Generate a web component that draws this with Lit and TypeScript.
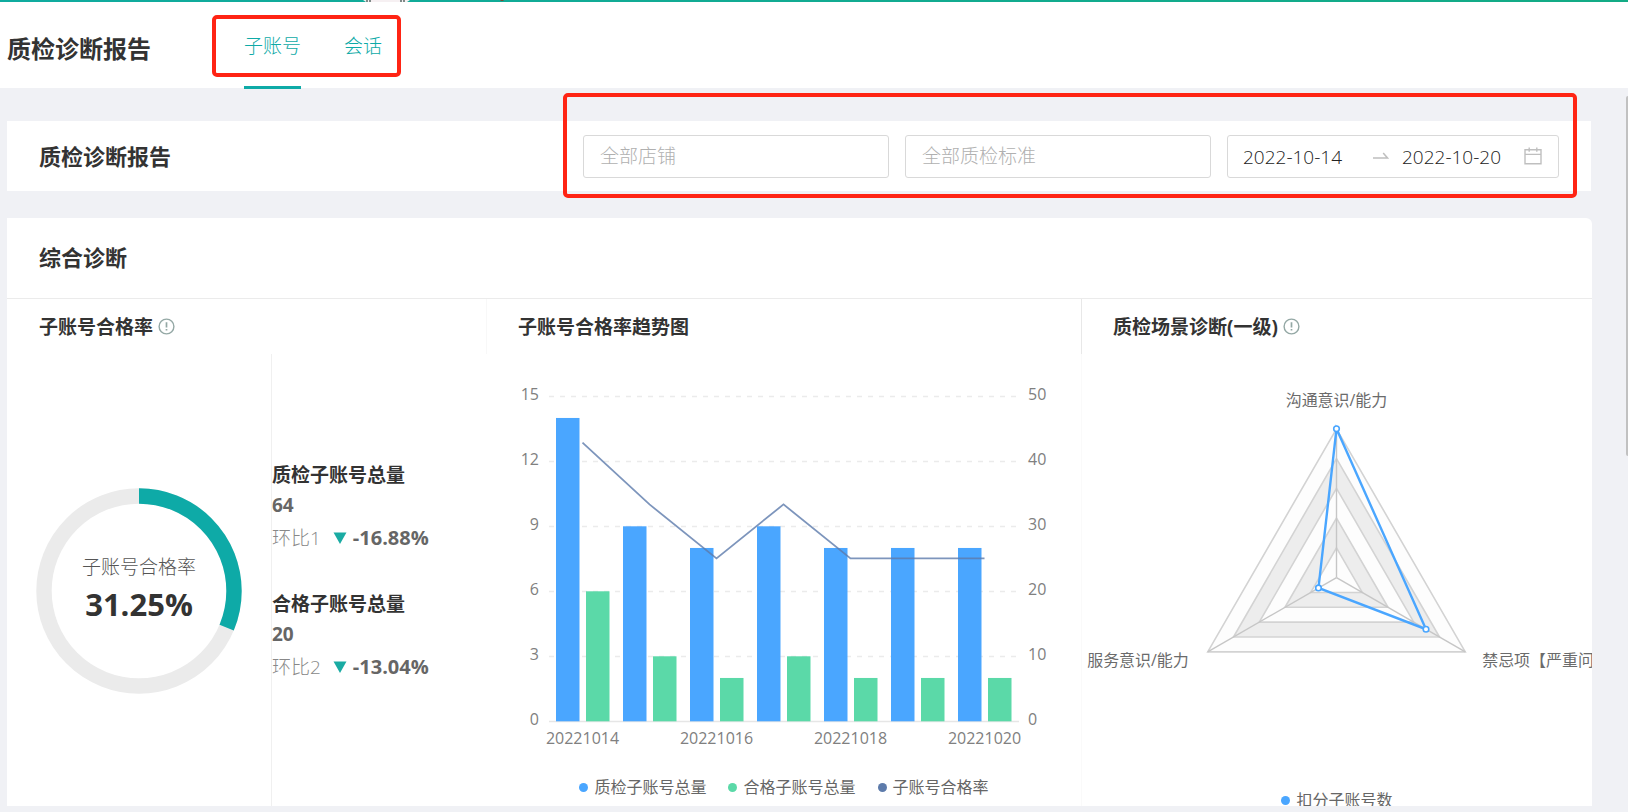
import { LitElement, html, svg, css } from "lit";
import { customElement, property, state } from "lit/decorators.js";

const FONT = css`"Open Sans", "Noto Sans CJK SC", sans-serif`;

const legendStyles = css`
  .legend {
    display: flex;
    justify-content: center;
    gap: 22px;
    margin: 0;
    padding: 0;
    list-style: none;
    font-size: 16px;
    line-height: 26px;
    color: #666;
    white-space: nowrap;
  }
  .legend li {
    display: flex;
    align-items: center;
    gap: 6px;
  }
  .dot {
    width: 9px;
    height: 9px;
    border-radius: 50%;
  }
  .blue { background: #4aa6ff; }
  .green { background: #5bd9a8; }
  .navy { background: #5d7bab; }
`;

@customElement("rate-ring")
class RateRing extends LitElement {
  @property({ type: Number }) value = 0;
  @property() label = "";

  static styles = css`
    :host {
      display: grid;
      width: 206px;
      height: 206px;
      font-family: ${FONT};
    }
    svg, .text { grid-area: 1 / 1; }
    .text {
      padding-top: 62px;
      text-align: center;
    }
    .label {
      font-size: 19px;
      line-height: 34px;
      font-weight: 300;
      color: #555;
    }
    .value {
      font-size: 31px;
      line-height: 40px;
      font-weight: 700;
      color: #333;
    }
  `;

  render() {
    const r = 95;
    const length = 2 * Math.PI * r;
    return html`
      <svg viewBox="0 0 206 206" aria-hidden="true">
        <circle cx="103" cy="103" r=${r} fill="none" stroke="#ebebeb" stroke-width="15.4"></circle>
        <circle cx="103" cy="103" r=${r} fill="none" stroke="#0eaaa7" stroke-width="15.4"
          stroke-dasharray="${(length * this.value) / 100} ${length}" transform="rotate(-90 103 103)"></circle>
      </svg>
      <div class="text">
        <div class="label">${this.label}</div>
        <div class="value">${this.value.toFixed(2)}%</div>
      </div>
    `;
  }
}

@customElement("trend-chart")
class TrendChart extends LitElement {
  private days = ["20221014", "20221015", "20221016", "20221017", "20221018", "20221019", "20221020"];
  private total = [14, 9, 8, 9, 8, 8, 8];
  private passed = [6, 3, 2, 3, 2, 2, 2];
  private rate = [42.9, 33.4, 25.1, 33.4, 25.1, 25.1, 25.1];

  static styles = [legendStyles, css`
    :host {
      display: block;
      font-family: ${FONT};
    }
    svg {
      display: block;
      width: 100%;
    }
    text {
      font-size: 16px;
      fill: #808080;
    }
    .end { text-anchor: end; }
    .middle { text-anchor: middle; }
  `];

  render() {
    const left = 62;
    const right = 532;
    const base = 368;
    const step = 67;
    const unit = 65 / 3;
    const centre = (i: number) => left + step * (i + 0.5);
    const points = this.rate.map((v, i) => `${centre(i)},${base - v * 6.5 - 0.5}`).join(" ");
    return html`
      <svg viewBox="0 0 594 420" role="img" aria-label="子账号合格率趋势图">
        ${[0, 1, 2, 3, 4, 5].map((n) => svg`
          <line x1=${left} x2=${right} y1=${base - n * 65 - 0.5} y2=${base - n * 65 - 0.5}
            stroke=${n ? "#ebebeb" : "#e6e6e6"} stroke-width="1.3" stroke-dasharray=${n ? "5 6" : "none"}></line>
          <text class="end" x="52" y=${base - n * 65 + 3}>${n * 3}</text>
          <text x="541" y=${base - n * 65 + 3}>${n * 10}</text>
        `)}
        ${this.total.map((v, i) => svg`
          <rect x=${centre(i) - 26.5} y=${base - v * unit - 0.7} width="23.5" height=${v * unit} fill="#4aa6ff"></rect>
        `)}
        ${this.passed.map((v, i) => svg`
          <rect x=${centre(i) + 3.5} y=${base - v * unit - 0.7} width="23.5" height=${v * unit} fill="#5bd9a8"></rect>
        `)}
        <polyline points=${points} fill="none" stroke="#5d7bab" stroke-opacity="0.8" stroke-width="1.8"></polyline>
        ${this.days.map((d, i) => i % 2 ? null : svg`
          <text class="middle" x=${centre(i)} y="390">${d}</text>
        `)}
      </svg>
      <ul class="legend">
        <li><span class="dot blue"></span>质检子账号总量</li>
        <li><span class="dot green"></span>合格子账号总量</li>
        <li><span class="dot navy"></span>子账号合格率</li>
      </ul>
    `;
  }
}

@customElement("radar-chart")
class RadarChart extends LitElement {
  static styles = [legendStyles, css`
    :host {
      display: block;
      font-family: ${FONT};
    }
    svg {
      display: block;
      width: 100%;
    }
    text {
      font-size: 16px;
      fill: #6b6b6b;
    }
    .end { text-anchor: end; }
    .middle { text-anchor: middle; }
  `];

  private vertices(scales: number[]) {
    return scales.map((s, i) => {
      const angle = (i * 2 * Math.PI) / 3;
      return [255 + 149 * s * Math.sin(angle), 224 - 149 * s * Math.cos(angle)];
    });
  }

  render() {
    const values = this.vertices([1, 0.695, 0.14]);
    return html`
      <svg viewBox="0 0 511 434" role="img" aria-label="质检场景诊断">
        ${[5, 4, 3, 2, 1].map((n) => svg`
          <polygon points=${this.vertices([n / 5, n / 5, n / 5]).join(" ")}
            fill=${n % 2 ? "#fdfdfd" : "#ededed"} stroke="#d3d3d3" stroke-width="1.6"></polygon>
        `)}
        ${this.vertices([1, 1, 1]).map(([x, y]) => svg`
          <line x1="255" y1="224" x2=${x} y2=${y} stroke="#c6c6c6" stroke-width="1.4"></line>
        `)}
        <polygon points=${values.join(" ")} fill="none" stroke="#4aa6ff" stroke-width="2.4"></polygon>
        ${values.map(([x, y]) => svg`
          <circle cx=${x} cy=${y} r="2.8" fill="#fff" stroke="#4aa6ff" stroke-width="1.6"></circle>
        `)}
        <text class="middle" x="255" y="52">沟通意识/能力</text>
        <text class="end" x="107" y="313">服务意识/能力</text>
        <text x="401" y="313">禁忌项【严重问题】</text>
      </svg>
      <ul class="legend">
        <li><span class="dot blue"></span>扣分子账号数</li>
      </ul>
    `;
  }
}

@customElement("app-root")
class AppRoot extends LitElement {
  @state() private tab = 0;

  private stats = [
    { title: "质检子账号总量", value: 64, note: "环比1", change: "-16.88%" },
    { title: "合格子账号总量", value: 20, note: "环比2", change: "-13.04%" },
  ];

  static styles = css`
    :host {
      display: flex;
      flex-direction: column;
      height: 100vh;
      overflow: hidden;
      background: #f0f1f5;
      color: #333;
      font-family: ${FONT};
    }
    * { box-sizing: border-box; }
    h1, h2, h3, p { margin: 0; }
    .strip {
      flex: none;
      height: 2px;
      padding-left: 363px;
      background: linear-gradient(90deg, #0fab9f, #13ab85);
    }
    .strip svg { display: block; }
    .header {
      flex: none;
      display: flex;
      align-items: stretch;
      gap: 93px;
      height: 86px;
      padding-left: 7px;
      background: #fff;
    }
    h1 {
      align-self: center;
      padding-top: 8px;
      font-size: 24px;
      line-height: 32px;
    }
    .tabs {
      position: relative;
      display: flex;
      gap: 43px;
    }
    .tab {
      height: 87px;
      border-bottom: 3px solid transparent;
      color: #0eaaa7;
      font-size: 19px;
      font-weight: 300;
      line-height: 88px;
      text-decoration: none;
    }
    .tab.on { border-color: #0eaaa7; }
    .mark {
      position: absolute;
      border: 4px solid #ff2414;
      border-radius: 5px;
      pointer-events: none;
    }
    .tabs .mark { inset: 13px -19px 11px -32px; }
    .filters .mark { inset: -42px -18px -20px -20px; }
    .scroller {
      flex: 1;
      min-height: 0;
      display: flex;
      align-items: flex-start;
    }
    .page {
      flex: 1;
      min-width: 0;
      height: 100%;
      display: flex;
      flex-direction: column;
      gap: 27px;
      padding: 33px 34px 6px 7px;
    }
    .thumb {
      width: 2px;
      height: 360px;
      margin-top: 8px;
      border-radius: 2px 0 0 2px;
      background: #c1c1c1;
    }
    .toolbar {
      flex: none;
      display: flex;
      align-items: center;
      justify-content: space-between;
      height: 70px;
      margin-right: 1px;
      padding: 0 32px;
      background: #fff;
    }
    h2 {
      font-size: 22px;
      line-height: 30px;
    }
    .filters {
      position: relative;
      display: flex;
      gap: 16px;
    }
    .field, .range {
      height: 43px;
      border: 1px solid #d9d9d9;
      border-radius: 3px;
      background: #fff;
    }
    .field {
      width: 306px;
      padding: 0 16px;
      font: 300 19px/28px ${FONT};
    }
    .field::placeholder {
      color: #b0b0b0;
      opacity: 1;
    }
    .range {
      display: flex;
      align-items: center;
      width: 332px;
      padding: 0 16px 0 15px;
    }
    .date {
      width: 106px;
      padding: 2px 0 0;
      border: 0;
      outline: 0;
      background: none;
      color: #222;
      font: 300 19px/28px ${FONT};
    }
    .arrow { margin: 0 13px 0 24px; }
    .calendar { margin-left: auto; }
    .card {
      flex: 1;
      min-height: 0;
      overflow: hidden;
      border-radius: 0 6px 0 0;
      background: #fff;
    }
    .card h2 {
      padding: 24px 32px 26px;
      border-bottom: 1px solid #ebebeb;
    }
    .columns {
      display: grid;
      grid-template-columns: 479fr 595fr 511fr;
    }
    h3 {
      display: flex;
      align-items: center;
      gap: 5px;
      height: 55px;
      padding-left: 32px;
      font-size: 19px;
      line-height: 28px;
      white-space: nowrap;
    }
    .col {
      min-width: 0;
      overflow: hidden;
    }
    .trend h3, .radar h3 { padding-left: 31px; }
    .trend h3 { border-left: 1px solid #f8f8f8; }
    .trend trend-chart { margin-left: 1px; }
    .radar h3 { border-left: 1px solid #e8e8e8; }
    .radar radar-chart { border-left: 1px solid #fafafa; }
    .rate {
      display: grid;
      grid-template-columns: 264px 1fr;
      height: 100%;
    }
    .ring {
      display: flex;
      justify-content: center;
      padding-top: 134px;
    }
    .stats {
      display: flex;
      flex-direction: column;
      gap: 33px;
      padding-top: 106px;
      border-left: 1px solid #f0f0f0;
      font-size: 19px;
      line-height: 30px;
    }
    .stat-title { font-weight: 700; }
    .stat-value {
      font-weight: 700;
      color: #666;
    }
    .change {
      display: flex;
      align-items: center;
      height: 36px;
      color: #888;
      font-weight: 300;
    }
    .change svg { margin: 0 6px 0 12px; }
    .change strong {
      color: #666;
      font-size: 20px;
      font-weight: 700;
    }
  `;

  private info() {
    return html`<svg width="17" height="17" viewBox="0 0 17 17" fill="none" stroke="#94a8a5" stroke-width="1.4" aria-hidden="true">
      <circle cx="8.5" cy="8.5" r="7.4"></circle>
      <path d="M8.5 4.3v5.2M8.5 10.9v1.7" stroke-width="1.7"></path>
    </svg>`;
  }

  private pick(event: Event, index: number) {
    event.preventDefault();
    this.tab = index;
  }

  render() {
    return html`
      <div class="strip">
        <svg width="142" height="2" viewBox="0 0 142 2" aria-hidden="true">
          <path d="M0 0h47l-3 2H3z" fill="#f6f0f2"></path>
          <path d="M3 1h5M37 1h5" stroke="#7f8a88" stroke-width="2" stroke-dasharray="2 1"></path>
          <path d="M137 0h4l-1 1h-2z" fill="#7a4a35"></path>
        </svg>
      </div>
      <header class="header">
        <h1>质检诊断报告</h1>
        <nav class="tabs">
          ${["子账号", "会话"].map((name, i) => html`
            <a href="#" class="tab ${this.tab === i ? "on" : ""}" @click=${(e: Event) => this.pick(e, i)}>${name}</a>
          `)}
          <span class="mark"></span>
        </nav>
      </header>
      <div class="scroller">
        <main class="page">
          <section class="toolbar">
            <h2>质检诊断报告</h2>
            <div class="filters">
              <input class="field" aria-label="店铺" placeholder="全部店铺">
              <input class="field" aria-label="质检标准" placeholder="全部质检标准">
              <div class="range">
                <input class="date" aria-label="开始日期" value="2022-10-14">
                <svg class="arrow" width="16" height="8" viewBox="0 0 16 8" fill="none" stroke="#bfbfbf" stroke-width="1.5" aria-hidden="true">
                  <path d="M0 6h14.5L10.2 1"></path>
                </svg>
                <input class="date" aria-label="结束日期" value="2022-10-20">
                <svg class="calendar" width="18" height="18" viewBox="0 0 18 18" fill="none" stroke="#bfbfbf" stroke-width="1.4" aria-hidden="true">
                  <path d="M1 2.8h16v14H1zM1 7.4h16M5.2.4v4.4M12.8.4v4.4"></path>
                </svg>
              </div>
              <span class="mark"></span>
            </div>
          </section>
          <section class="card">
            <h2>综合诊断</h2>
            <div class="columns">
              <div class="col">
                <h3>子账号合格率${this.info()}</h3>
                <div class="rate">
                  <div class="ring"><rate-ring .value=${31.25} label="子账号合格率"></rate-ring></div>
                  <div class="stats">
                    ${this.stats.map((s) => html`
                      <div>
                        <p class="stat-title">${s.title}</p>
                        <p class="stat-value">${s.value}</p>
                        <p class="change">
                          ${s.note}
                          <svg width="14" height="12" viewBox="0 0 14 12" aria-hidden="true"><path d="M.5.5h13L7 12z" fill="#1aaba3"></path></svg>
                          <strong>${s.change}</strong>
                        </p>
                      </div>
                    `)}
                  </div>
                </div>
              </div>
              <div class="col trend">
                <h3>子账号合格率趋势图</h3>
                <trend-chart></trend-chart>
              </div>
              <div class="col radar">
                <h3>质检场景诊断(一级)${this.info()}</h3>
                <radar-chart></radar-chart>
              </div>
            </div>
          </section>
        </main>
        <div class="thumb"></div>
      </div>
    `;
  }
}
